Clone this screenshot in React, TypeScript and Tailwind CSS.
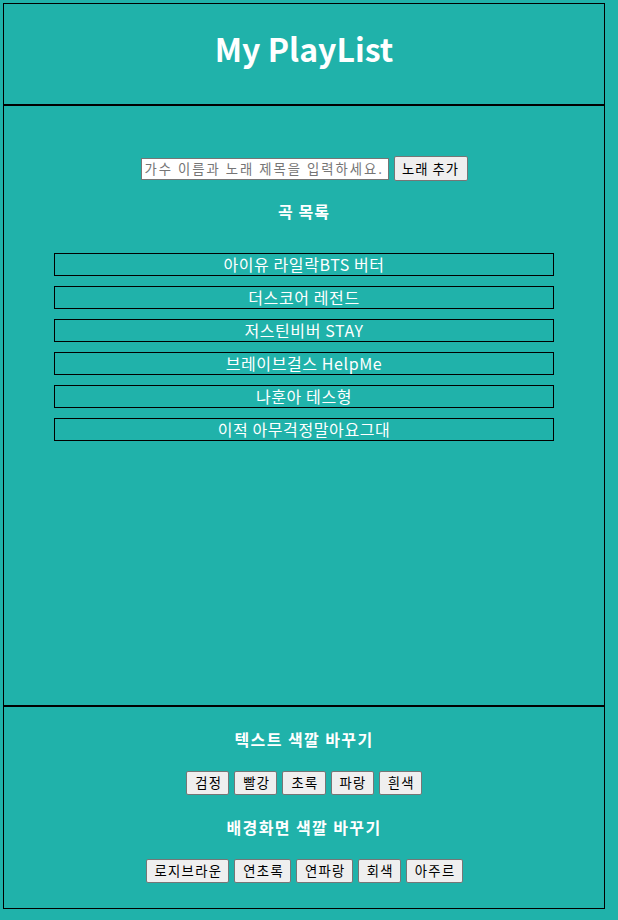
import React from "react";

const songs = [
  "아이유 라일락BTS 버터",
  "더스코어 레전드",
  "저스틴비버 STAY",
  "브레이브걸스 HelpMe",
  "나훈아 테스형",
  "이적 아무걱정말아요그대",
];

const textColors = ["검정", "빨강", "초록", "파랑", "흰색"];
const bgColors = ["로지브라운", "연초록", "연파랑", "회색", "아주르"];

const font = { fontFamily: '"Noto Sans CJK KR", "Noto Sans", sans-serif' };

const Btn = ({ label }: { label: string }) => (
  <button className="h-[24px] pl-[8px] pr-[6px] bg-[#efefef] border border-[#767676] rounded-[2px] text-[13.33px] tracking-[1.3px] leading-none text-black">
    {label}
  </button>
);

const App = () => {
  return (
    <div className="min-h-screen bg-[#20b2aa] p-[3px]" style={font}>
      <div className="w-[602px] border border-black flex flex-col">
        <header className="h-[102px] border-b-2 border-black pt-[24px]">
          <h1 className="text-center text-white font-bold text-[32px] leading-[40px]">
            My PlayList
          </h1>
        </header>

        <main className="h-[601px] border-b-2 border-black flex flex-col items-center">
          <div className="mt-[50px] flex items-center gap-[5px] h-[25px]">
            <input
              className="w-[248px] h-[22px] bg-white border border-[#767676] px-[3px] text-[13.33px] tracking-[2px] placeholder:text-[#757575] outline-none"
              placeholder="가수 이름과 노래 제목을 입력하세요."
            />
            <button className="h-[25px] w-[74px] bg-[#efefef] border border-[#767676] rounded-[2px] text-[13.33px] tracking-[1px] leading-none text-black">
              노래 추가
            </button>
          </div>
          <h4 className="mt-[18px] text-white font-bold text-[16px] tracking-[1px] leading-[24px]">곡 목록</h4>
          <ul className="mt-[30px] flex flex-col gap-[10px]">
            {songs.map((s) => (
              <li
                key={s}
                className="w-[500px] h-[23px] border border-black text-white text-[16px] tracking-[0.6px] leading-[21px] text-center"
              >
                {s}
              </li>
            ))}
          </ul>
        </main>

        <footer className="h-[201px] flex flex-col items-center">
          <h4 className="mt-[20px] text-white font-bold text-[16px] tracking-[1.4px] leading-[24px]">텍스트 색깔 바꾸기</h4>
          <div className="mt-[20px] flex gap-[5px]">
            {textColors.map((c) => (
              <Btn key={c} label={c} />
            ))}
          </div>
          <h4 className="mt-[20px] text-white font-bold text-[16px] tracking-[1.4px] leading-[24px]">배경화면 색깔 바꾸기</h4>
          <div className="mt-[20px] flex gap-[5px]">
            {bgColors.map((c) => (
              <Btn key={c} label={c} />
            ))}
          </div>
        </footer>
      </div>
    </div>
  );
};

export default App;
